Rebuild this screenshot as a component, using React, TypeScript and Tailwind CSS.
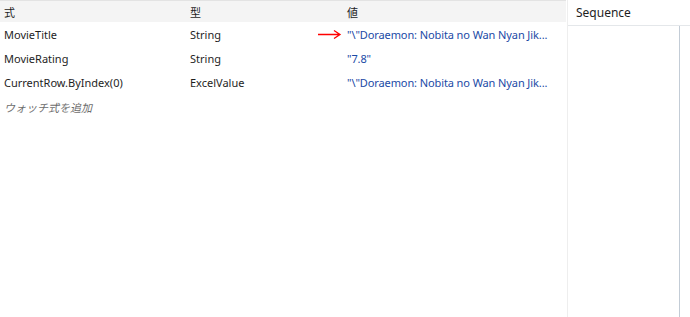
const rows = [
  { name: "MovieTitle", type: "String", value: "\"\\\"Doraemon: Nobita no Wan Nyan Jik...", arrow: true },
  { name: "MovieRating", type: "String", value: "\"7.8\"", arrow: false },
  { name: "CurrentRow.ByIndex(0)", type: "ExcelValue", value: "\"\\\"Doraemon: Nobita no Wan Nyan Jik...", arrow: false },
];

function RedArrow() {
  return (
    <svg width="24" height="10" viewBox="0 0 24 10" className="absolute left-[-25px] top-1/2 -translate-y-1/2">
      <path d="M0 5.5H22M16 1.5L22 5.5L16 9.5" fill="none" stroke="#ff0000" strokeWidth="1.3" />
    </svg>
  );
}

export default function App() {
  return (
    <div
      className="flex h-[317px] w-[690px] overflow-hidden bg-white text-[11px] text-[#1e1e1e]"
      style={{ fontFamily: '"Noto Sans", "Noto Sans CJK JP", sans-serif' }}
    >
      <div className="w-[566px] shrink-0 border-t border-[#e3e3e3]">
        <div className="grid h-[21px] grid-cols-[186px_153px_1fr] items-center bg-[#f4f4f4] pl-1 pt-px leading-none">
          <span>式</span>
          <span>型</span>
          <span className="pl-1">値</span>
        </div>
        {rows.map((row) => (
          <div key={row.name} className="grid h-6 grid-cols-[186px_153px_1fr] items-center whitespace-nowrap pl-1 leading-none">
            <span>{row.name}</span>
            <span>{row.type}</span>
            <span className="relative pl-1 tracking-[-0.1px] text-[#1a4aa6]">
              {row.arrow && <RedArrow />}
              {row.value}
            </span>
          </div>
        ))}
        <div className="flex h-[26px] items-center pl-1 pt-px italic leading-none text-[#6d6d6d]">ウォッチ式を追加</div>
      </div>
      <div className="ml-px flex flex-1 flex-col border-l border-[#eeeeee]">
        <div className="flex h-[26px] items-center border-b border-[#e4e7ea] pl-[8px] text-[12px] leading-none">Sequence</div>
        <div className="flex flex-1">
          <div className="w-[112px] border-r border-[#c3ccd6]" />
        </div>
      </div>
    </div>
  );
}
